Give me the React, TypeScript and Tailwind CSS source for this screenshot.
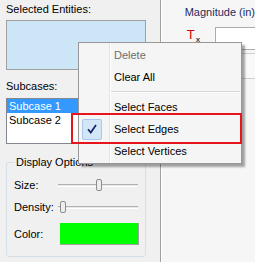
import React from 'react'

const font = { fontFamily: '"Liberation Sans", Arial, sans-serif' }

function Slider({ thumb }: { thumb: number }) {
  return (
    <div className="relative h-[22px] w-[80px] ml-[-2px] flex items-center">
      <div className="h-[3px] w-full bg-[#e7eaea] border-t border-[#b0b0b0] border-b border-b-white" />
      <div
        className="absolute top-[5px] w-[6px] h-[12px] rounded-[2px] border border-[#8c8c8c] bg-[#eeeeee]"
        style={{ left: thumb }}
      />
    </div>
  )
}

function MenuItem({ label, disabled, checked }: { label: string; disabled?: boolean; checked?: boolean }) {
  return (
    <div className="flex h-[22px] items-center">
      <div className="w-[30px] h-full flex items-center pl-[3px]">
        {checked && (
          <div className="w-[20px] h-[21px] rounded-[2px] border border-[#a8c9ec] bg-[#d3e6f8] flex items-center justify-center">
            <svg width="10" height="10" viewBox="0 0 10 10">
              <path d="M1 5.2 L3.8 8.6 L9 1" fill="none" stroke="#14206b" strokeWidth="1.7" />
            </svg>
          </div>
        )}
      </div>
      <span className={`pl-[5px] text-[11px] leading-[13px] ${disabled ? 'text-[#6d6d6d]' : 'text-black'}`}>{label}</span>
    </div>
  )
}

export default function App() {
  return (
    <div className="relative w-[255px] h-[262px] overflow-hidden flex" style={font}>
      {/* left panel */}
      <div className="w-[162px] h-full bg-[#f0f0f0] border-r border-[#a0a0a0] pl-[6px] pt-[3px] text-[11px] leading-[13px] text-black">
        <div>Selected Entities:</div>
        <div className="mt-[4px] w-[140px] h-[50px] border border-[#a0a0a0] bg-[#cde6f7]" />
        <div className="mt-[10px]">Subcases:</div>
        <div className="mt-[5px] w-[140px] h-[46px] border border-[#828790] bg-white">
          <div className="h-[14px] bg-[#3399ff] text-white pl-[2px] flex items-center">Subcase 1</div>
          <div className="h-[14px] pl-[2px] flex items-center">Subcase 2</div>
        </div>
        <fieldset className="mt-[12px] w-[140px] h-[101px] border border-[#d5dfe5] rounded-[3px] pl-[7px] pr-[6px]">
          <legend className="ml-[1px] px-[1px]">Display Options</legend>
          <div className="pt-[5px] grid grid-cols-[46px_1fr] items-center">
            <div className="h-[22px] flex items-center">Size:</div>
            <Slider thumb={38} />
            <div className="h-[22px] flex items-center">Density:</div>
            <Slider thumb={2} />
            <div className="h-[22px] mt-[5px] flex items-center">Color:</div>
            <div className="h-[22px] mt-[5px] w-[79px] bg-[#00ff00] border-r border-b border-[#a0a0a0]" />
          </div>
        </fieldset>
      </div>

      {/* right panel */}
      <div className="flex-1 h-full bg-[#f6f6f6] border-l border-white pt-[6px]">
        <div className="pl-[23px] text-[11px] leading-[13px] text-[#1e2b5e] whitespace-nowrap">Magnitude (in)</div>
        <div className="mt-[8px] flex">
          <div className="pl-[25px] w-[53px] flex items-start pt-[2px]">
            <span className="text-[13px] leading-[11px] text-[#cc0000]">T</span>
            <span className="text-[8px] font-bold leading-[8px] text-[#444] mt-[7px] ml-[1px]">x</span>
          </div>
          <div className="flex-1 flex flex-col">
            <div className="h-[23px] bg-white border border-[#abadb3] border-r-0" />
            <div className="mt-[3px] h-[26px] border-t border-b border-[#d0d0d0] bg-[#f9f9f9]" />
          </div>
        </div>
      </div>

      {/* context menu */}
      <div className="absolute left-[78px] top-[42px] w-[164px] h-[122px] bg-[#f5f5f5] border border-[#979797] shadow-[3px_3px_2px_rgba(0,0,0,0.35)] py-[1px]">
        <div className="absolute left-[30px] top-0 bottom-0 w-[2px] border-l border-[#e2e3e3] border-r border-r-white" />
        <div className="relative">
          <MenuItem label="Delete" disabled />
          <MenuItem label="Clear All" />
          <div className="h-[8px] flex items-center pl-[32px] pr-[1px]">
            <div className="w-full h-[2px] border-t border-[#d7d7d7] border-b border-b-white" />
          </div>
          <MenuItem label="Select Faces" />
          <MenuItem label="Select Edges" checked />
          <MenuItem label="Select Vertices" />
        </div>
      </div>

      {/* annotation */}
      <div className="absolute left-[71px] top-[113px] w-[171px] h-[31px] border-2 border-[#e8141c]" />
    </div>
  )
}
